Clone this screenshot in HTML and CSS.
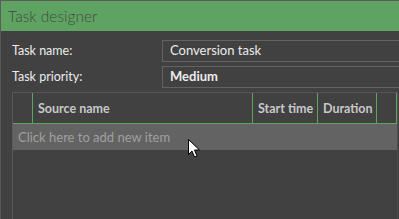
FILE: index.html
```html
<!DOCTYPE html>
<html>
<head>
<meta charset="utf-8">
<link rel="stylesheet" href="styles.css">
</head>
<body>
<div class="window">
  <div class="titlebar">Task designer</div>
  <div class="content">
    <div class="form">
      <div class="row">
        <div class="label">Task name:</div>
        <div class="field">Conversion task</div>
      </div>
      <div class="row">
        <div class="label">Task priority:</div>
        <div class="field bold">Medium</div>
      </div>
    </div>
    <div class="grid">
      <div class="header">
        <div class="hcell c0"></div>
        <div class="hcell c1">Source name</div>
        <div class="hcell c2">Start time</div>
        <div class="hcell c3">Duration</div>
        <div class="hcell c4"></div>
      </div>
      <div class="newrow">Click here to add new item</div>
    </div>
  </div>
  <svg class="cursor" width="13" height="20" viewBox="0 0 13 20">
    <path d="M0.5 0.5 L0.5 15.5 L4 12 L6.5 18 L9 17 L6.5 11 L11.5 11 Z" fill="#ffffff" stroke="#000000" stroke-width="1"/>
  </svg>
</div>
</body>
</html>
```

FILE: styles.css
```css
html, body {
  margin: 0;
  padding: 0;
  width: 399px;
  height: 219px;
  overflow: hidden;
  background: #414141;
}
.window {
  position: relative;
  width: 399px;
  height: 219px;
  border-top: 1px solid #5c5c5c;
  box-sizing: border-box;
  display: flex;
  flex-direction: column;
  background: #414141;
  font-family: Lato, "Open Sans", sans-serif;
}
.titlebar {
  height: 30px;
  flex: none;
  background: #5fa362;
  color: #3f4d40;
  font-weight: 300;
  font-size: 15.5px;
  line-height: 30px;
  padding-left: 7px;
  border-left: 1px solid #5c5c5c;
}
.content {
  flex: 1;
  display: flex;
  flex-direction: column;
  border-left: 1px solid #585858;
  padding: 9px 0 0 11px;
  overflow: hidden;
}
.form {
  display: flex;
  flex-direction: column;
  gap: 4px;
}
.row {
  display: flex;
  align-items: center;
}
.label {
  width: 150px;
  flex: none;
  color: #ececec;
  font-size: 12.5px;
  margin-top: -2px;
}
.field {
  flex: none;
  width: 260px;
  height: 22px;
  box-sizing: border-box;
  border: 1px solid #626262;
  color: #ececec;
  font-size: 13px;
  line-height: 19px;
  padding-left: 7px;
}
.field.bold {
  font-weight: 700;
}
.grid {
  margin-top: 4px;
  width: 386px;
  flex: 1;
  box-sizing: border-box;
  border-left: 1px solid #5a5a5a;
  border-top: 1px solid #575757;
  border-right: 1px solid #4c4c4c;
  display: flex;
  flex-direction: column;
}
.header {
  display: flex;
  height: 31px;
  box-sizing: border-box;
  border-bottom: 1px solid #5ea361;
}
.hcell {
  box-sizing: border-box;
  border-right: 1px solid #5ea361;
  color: #c8c8c8;
  font-weight: 700;
  font-size: 12.5px;
  line-height: 31px;
  padding-left: 5px;
  white-space: nowrap;
  overflow: hidden;
}
.c0 { width: 20px; }
.c1 { width: 220px; }
.c2 { width: 65px; }
.c3 { width: 59px; }
.c4 { width: 20px; }
.newrow {
  height: 26px;
  width: 384px;
  background: #636363;
  color: #a0a0a0;
  font-size: 13px;
  line-height: 26px;
  padding-left: 5px;
  box-sizing: border-box;
}
.cursor {
  position: absolute;
  left: 188px;
  top: 138px;
}
```
